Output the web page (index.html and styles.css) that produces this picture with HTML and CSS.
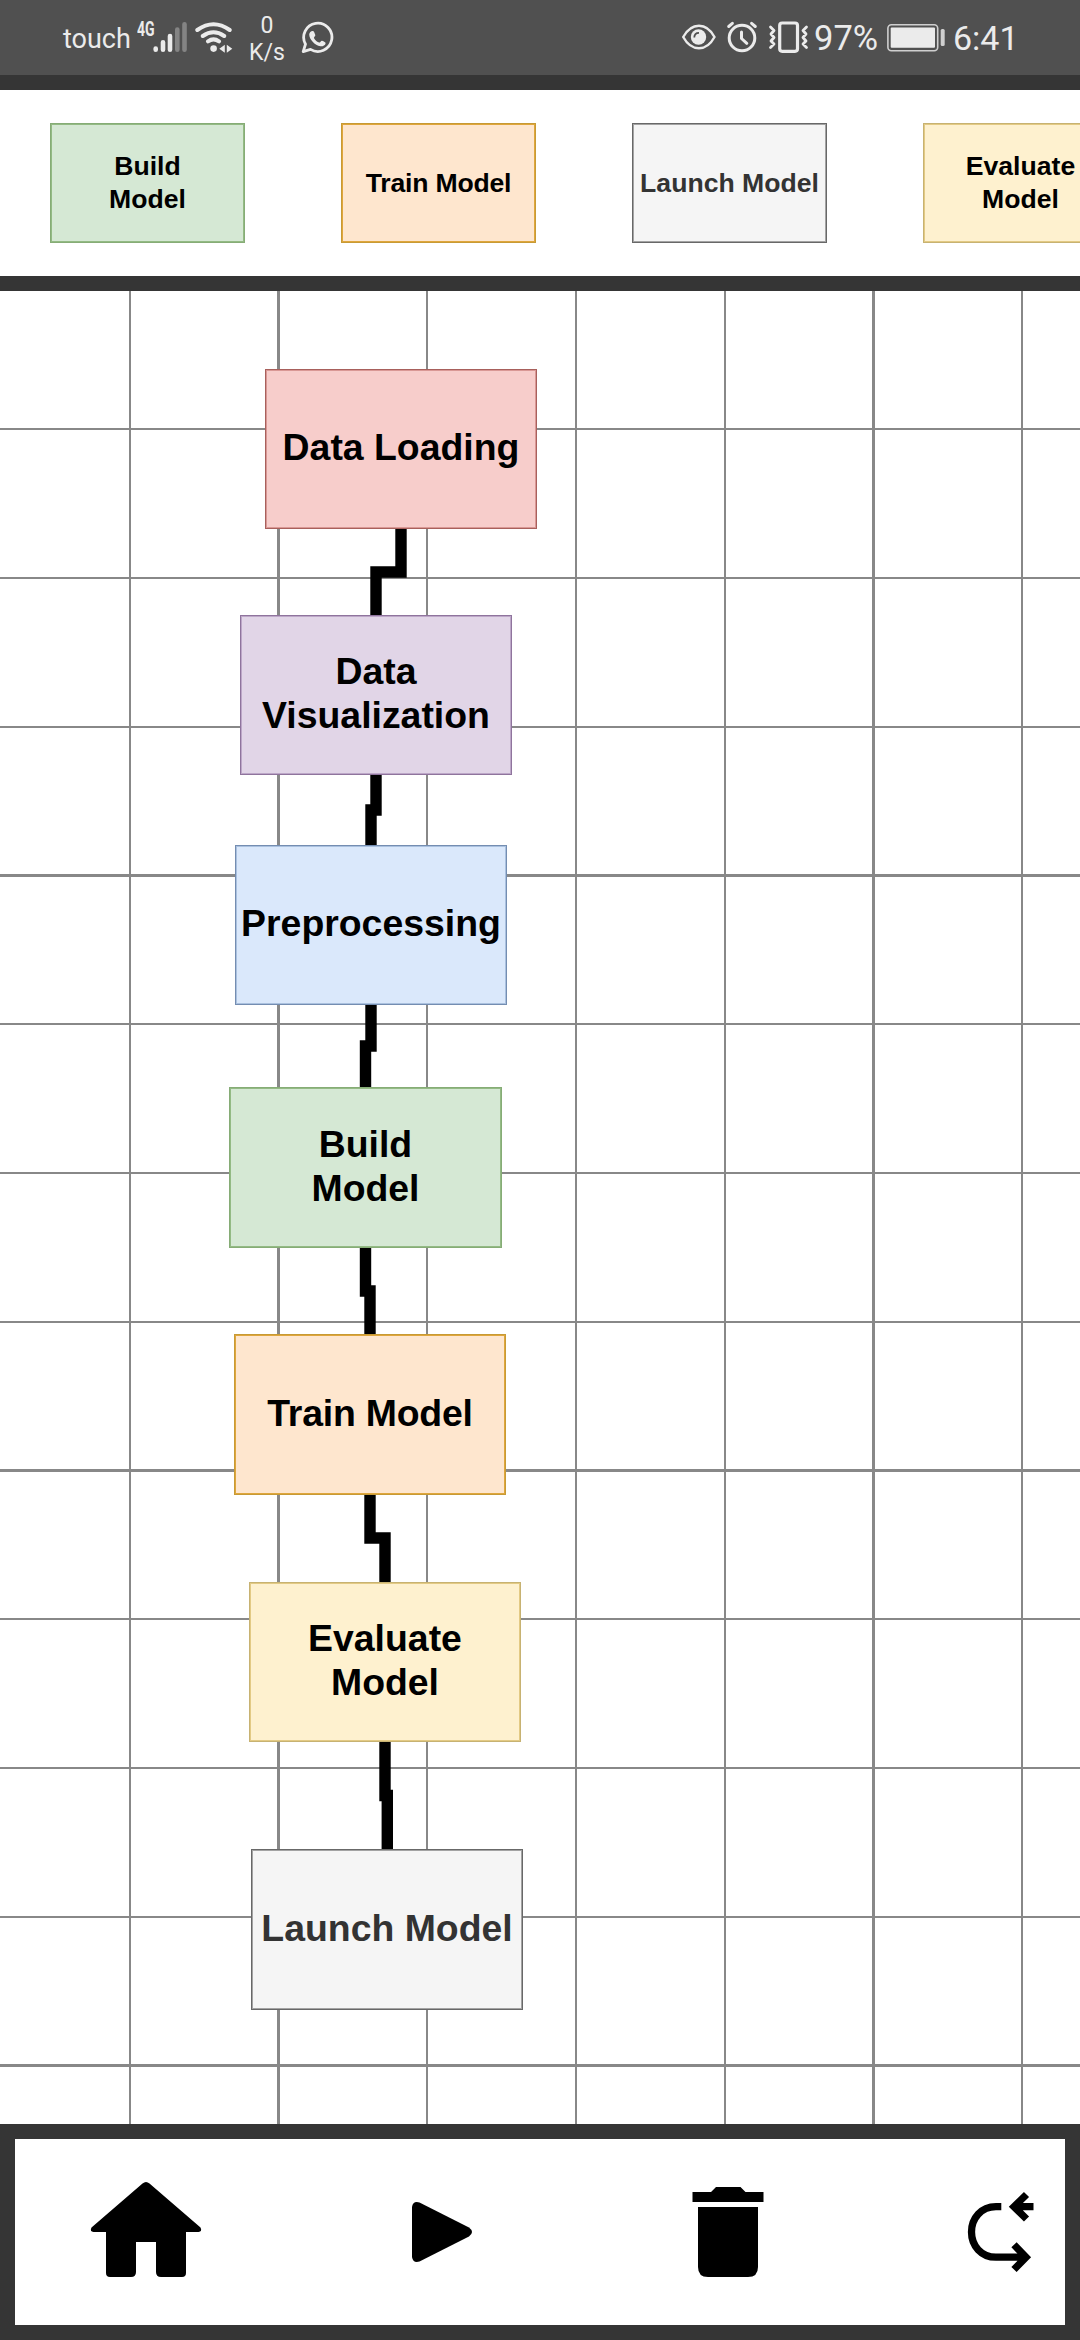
FILE: index.html
```html
<!DOCTYPE html>
<html lang="en">
<head>
<meta charset="utf-8">
<title>Model Pipeline</title>
<link rel="stylesheet" href="styles.css">
</head>
<body>
<div class="screen">
  <header class="status">
    <div class="status-group status-left">
      <span class="carrier">touch</span>
      <span class="network">4G</span>
      <svg class="status-icon" width="34" height="75" viewBox="153 0 34 75" stroke-width="4.6" stroke-linecap="round" fill="none">
        <path stroke="#ebebeb" d="M155.7 48.5v1.3M163 42.3v7.5M170 36v13.8"/>
        <path stroke="#848484" d="M177.3 29.5v20.3M184.5 24.3v25.5"/>
      </svg>
      <svg class="status-icon wifi" width="38" height="75" viewBox="195 0 38 75" fill="none" stroke="#ebebeb" stroke-width="4" stroke-linecap="round">
        <path d="M197.3 30Q213.5 18.5 229.7 30M202.8 36Q213.5 28.5 224.2 36M208 41.3Q213.5 37.5 219 41.3"/>
        <circle cx="213.6" cy="48.6" r="3.3" fill="#ebebeb" stroke="none"/>
        <path d="M219.3 48.7l5.5-4v8zM232.3 48.7l-5.5-4v8z" fill="#ebebeb" stroke="none"/>
      </svg>
      <div class="speed"><span>0</span><span>K/s</span></div>
      <svg class="status-icon" width="34" height="75" viewBox="300 0 34 75" fill="none" stroke="#ebebeb" stroke-width="2.8" stroke-linejoin="round">
        <path d="M303.2 51.6l2.3-7.4A14.1 14.1 0 1 1 310.5 49.4z"/>
        <path fill="#ebebeb" stroke="none" d="M309.2 34.6c0-2.4 2.3-4 3.8-3.6 1.2.3 1.6 2.4 2.3 4.1.4 1-1.7 2.3-1.4 3 1 2.2 3.5 4.1 5.3 4.5.9.2 1.9-2.3 2.9-1.9 1.8.7 3.7 1.5 3.5 2.7-.4 1.9-2.9 3.2-5.2 2.9-5.6-.8-11.2-7-11.2-11.700z"/>
      </svg>
    </div>
    <div class="status-group status-right">
      <svg class="status-icon" width="34" height="75" viewBox="682 0 34 75" fill="none" stroke="#ebebeb" stroke-width="2.4">
        <path d="M683.2 37C691.5 22 706.5 22 714.5 37C706.5 52 691.5 52 683.2 37Z"/>
        <circle cx="698.5" cy="37" r="7.7" fill="#ebebeb" stroke="none"/>
        <path d="M694.3 37.5q0-4.700 4.700-4.700" stroke="#505050" stroke-width="1.8"/>
      </svg>
      <svg class="status-icon alarm" width="32" height="75" viewBox="726 0 32 75" fill="none" stroke="#ebebeb" stroke-width="3" stroke-linecap="round" stroke-linejoin="round">
        <circle cx="742" cy="38" r="12.8"/>
        <path d="M741.5 32v6.5l5.3 4.800M728.7 26.5l3.700-3.200M755.3 26.5l-3.700-3.200"/>
      </svg>
      <svg class="status-icon vibrate" width="42" height="75" viewBox="768 0 42 75" fill="none" stroke="#ebebeb" stroke-width="2.8" stroke-linecap="round" stroke-linejoin="round">
        <rect x="779.7" y="23" width="17.8" height="28.3" rx="2.5" stroke-width="3.2"/>
        <path d="M770.5 27l3.500 3.500-3 3.500 3 3.500-3 3.500 3 3-3.500 3.500M806.500 27l-3.500 3.500 3 3.500-3 3.500 3 3.500-3 3 3.500 3.500"/>
      </svg>
      <span class="percent">97%</span>
      <svg class="status-icon" width="60" height="75" viewBox="885 0 60 75" fill="none">
        <rect x="886.9" y="24.7" width="49.8" height="26" rx="3.5" stroke="#cfcfcf" stroke-width="1.6"/>
        <rect x="889.7" y="27.5" width="44.3" height="20.3" rx="1" fill="#ebebeb"/>
        <rect x="939.7" y="29" width="4" height="17" rx="1.5" fill="#cfcfcf"/>
      </svg>
      <span class="clock">6:41</span>
    </div>
  </header>

  <section class="palette">
    <div class="block green">Build<br>Model</div>
    <div class="block orange">Train Model</div>
    <div class="block gray">Launch Model</div>
    <div class="block yellow">Evaluate<br>Model</div>
  </section>

  <main class="canvas">
    <svg class="wires" width="1080" height="1833" viewBox="0 291 1080 1833" fill="none">
      <path stroke="#888" stroke-width="2" d="M130 291V2124M427 291V2124M576 291V2124M725 291V2124M1022 291V2124M0 429H1080M0 578H1080M0 727H1080M0 1024H1080M0 1173H1080M0 1322H1080M0 1619H1080M0 1768H1080M0 1917H1080"/>
      <path stroke="#888" stroke-width="3" d="M278.5 291V2124M873.5 291V2124M0 875.5H1080M0 1470.5H1080M0 2065.5H1080"/>
      <path stroke="#000" stroke-width="11.4" d="M401 520V572H376V625M376 770V810H371V850M371 1000V1046H365.5V1090M365.5 1240V1291H370V1340M370 1490V1538H385V1590M385 1740V1795.5H387.3V1855"/>
    </svg>
    <div class="node red n-loading">Data Loading</div>
    <div class="node purple n-visual">Data<br>Visualization</div>
    <div class="node blue n-prep">Preprocessing</div>
    <div class="node green n-build">Build<br>Model</div>
    <div class="node orange n-train">Train Model</div>
    <div class="node yellow n-eval">Evaluate<br>Model</div>
    <div class="node gray n-launch">Launch Model</div>
  </main>

  <nav class="toolbar">
    <button class="tool" aria-label="Home">
      <svg width="120" height="120" viewBox="0 0 120 120"><path d="M56.5 11.5Q60 8.5 63.5 11.5L114.5 55.5Q116.5 59.5 112.5 60H100V101Q100 105 96 105H75Q70 105 70 100V70H50V100Q50 105 45 105H24Q20 105 20 101V60H7.5Q3.5 59.5 5.5 55.5Z"/></svg>
    </button>
    <button class="tool" aria-label="Run">
      <svg width="120" height="120" viewBox="0 0 120 120"><path d="M35 35Q36 28.5 42.5 30.5L92 55.5Q98 60 92 64.5L42.5 89.5Q36 91.5 35 85Z"/></svg>
    </button>
    <button class="tool" aria-label="Delete">
      <svg width="120" height="120" viewBox="0 0 120 120"><path d="M24.5 20H43L48 15H72.5L77.5 20H95.5V30H24.5ZM30 35H90V95Q90 105 80 105H40Q30 105 30 95Z"/></svg>
    </button>
    <button class="tool" aria-label="Connect">
      <svg width="120" height="120" viewBox="0 0 120 120" fill="none" stroke="#000" stroke-width="7.3"><path d="M41.3 34.7H36C21 34.7 11.5 46.5 11.5 60C11.5 73.5 21 85.2 36 85.2H66M66.5 22.5L54 34.7L66.5 47M56 34.7H73.5M54 72.8L66 85.2L54 97.5"/></svg>
    </button>
  </nav>
</div>
</body>
</html>
```
FILE: styles.css
```css
* { box-sizing: border-box; }
body { margin: 0; background: #353535; }
.screen {
  display: flex;
  flex-direction: column;
  width: 1080px;
  height: 2340px;
  overflow: hidden;
  font-family: "Liberation Sans", Arial, sans-serif;
}

/* status bar */
.status {
  display: flex;
  justify-content: space-between;
  height: 75px;
  padding: 0 66px 0 63px;
  background: #505050;
  color: #ebebeb;
  font-family: Roboto, sans-serif;
}
.status-group { display: flex; align-items: flex-start; white-space: nowrap; }
.status-icon { display: block; flex: none; }
.carrier { width: 74px; font-size: 27px; line-height: 32px; padding-top: 23px; }
.network {
  width: 16px;
  font-size: 20px;
  font-weight: 700;
  line-height: 22px;
  padding-top: 18px;
  transform: scaleX(.7);
  transform-origin: left;
}
.wifi { margin-left: 8px; }
.speed {
  display: flex;
  flex-direction: column;
  align-items: center;
  width: 36px;
  margin: 14px 15px 0 16px;
  font-size: 23px;
  line-height: 27px;
}
.speed span:first-child { height: 25px; line-height: 23px; }
.alarm { margin-left: 10px; }
.vibrate { margin-left: 10px; }
.percent { width: 76px; padding: 18px 0 0 4px; font-size: 34.500px; line-height: 40px; }
.clock { width: 61px; margin-left: 7px; padding-top: 18px; font-size: 34px; line-height: 40px; }

/* block palette */
.palette {
  display: flex;
  align-items: center;
  gap: 96px;
  height: 216px;
  padding-left: 50px;
  border-top: 15px solid #353535;
  border-bottom: 15px solid #353535;
  background: #fff;
  overflow: hidden;
}
.block, .node {
  display: flex;
  align-items: center;
  justify-content: center;
  text-align: center;
  font-weight: 700;
  white-space: nowrap;
  color: #000;
  border: 1px solid;
}
.block {
  flex: none;
  width: 195px;
  height: 120px;
  font-size: 26.600px;
  line-height: 32.700px;
}
.block.orange, .node.orange { letter-spacing: -.2px; }

.red { background: #f7cdcb; border-color: #a8605c; box-shadow: inset 0 0 0 1px #d99895; }
.purple { background: #e1d5e7; border-color: #8f749d; box-shadow: inset 0 0 0 1px #bda7c8; }
.blue { background: #dae8fb; border-color: #748db1; box-shadow: inset 0 0 0 1px #aac1df; }
.green { background: #d5e8d4; border-color: #86ac76; box-shadow: inset 0 0 0 1px #93ba84; }
.orange { background: #fee6ce; border-color: #c79a35; box-shadow: inset 0 0 0 1px #dfa63c; }
.yellow { background: #fef1cf; border-color: #c7b272; box-shadow: inset 0 0 0 1px #e3ca84; }
.gray { background: #f5f5f5; border-color: #686868; box-shadow: inset 0 0 0 1px #a3a3a3; color: #333; }

/* flow canvas */
.canvas { position: relative; height: 1833px; background: #fff; overflow: hidden; }
.wires { position: absolute; left: 0; top: 0; }
.node {
  position: absolute;
  width: 272px;
  height: 160px;
  padding-bottom: 2px;
  font-size: 37.400px;
  line-height: 43.600px;
}
.n-loading { left: 265px; top: 78px; }
.n-visual { left: 240px; top: 324px; }
.n-prep { left: 235px; top: 554px; }
.n-build { left: 229px; top: 796px; width: 273px; height: 161px; }
.n-train { left: 234px; top: 1043px; height: 161px; }
.n-eval { left: 249px; top: 1291px; }
.n-launch { left: 251px; top: 1558px; height: 161px; }

/* bottom toolbar */
.toolbar {
  display: flex;
  height: 216px;
  border: 15px solid #353535;
  background: #fff;
}
.tool {
  flex: none;
  display: flex;
  align-items: center;
  justify-content: center;
  width: 291px;
  padding: 0;
  border: 0;
  background: none;
}
.tool:first-child { width: 276px; padding-right: 15px; }
.tool:last-child { width: 192px; justify-content: flex-end; padding-right: 0; }
.tool:last-child svg { margin-right: -15px; }
```
